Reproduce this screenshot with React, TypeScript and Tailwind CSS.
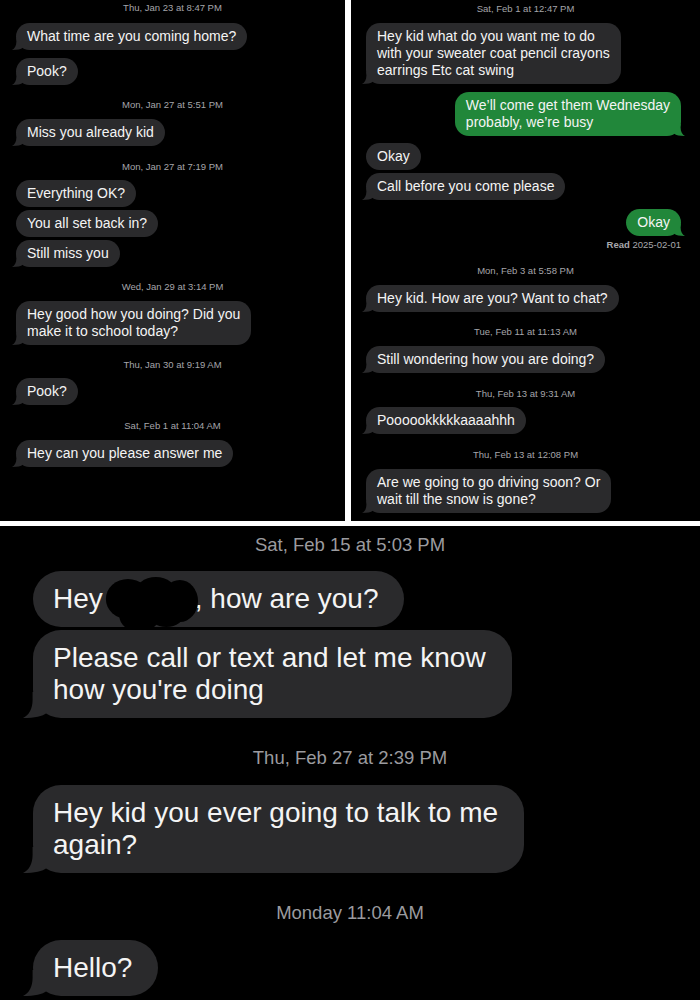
import type { ReactNode } from "react";

type Size = "sm" | "lg";

function Tail({ size, sent }: { size: Size; sent?: boolean }) {
  const fill = sent ? "#21873a" : "#2a2a2c";
  const pos =
    size === "sm"
      ? sent
        ? "-right-[4px] w-[11px] h-[12px] -scale-x-100"
        : "-left-[4px] w-[11px] h-[12px]"
      : "-left-[10px] w-[24px] h-[26px]";
  return (
    <svg
      viewBox="0 0 20 20"
      preserveAspectRatio="none"
      className={`absolute bottom-0 ${pos}`}
      aria-hidden
    >
      <path d="M8 0 L20 0 L20 16 C16 19 10 20 0 20 C5 18 8 13 8 6 Z" fill={fill} />
    </svg>
  );
}

function Bubble({
  children,
  size = "sm",
  tail,
  sent,
  className = "",
}: {
  children: ReactNode;
  size?: Size;
  tail?: boolean;
  sent?: boolean;
  className?: string;
}) {
  const base =
    size === "sm"
      ? "rounded-[14px] px-[11px] py-[5px] text-[14px] leading-[17px]"
      : "rounded-[28px] pl-5 pr-[26px] py-3 text-[28px] leading-[32px]";
  const color = sent ? "bg-[#21873a]" : "bg-[#2a2a2c]";
  return (
    <div
      className={`relative w-fit whitespace-nowrap text-[#f4f4f4] ${base} ${color} ${
        sent ? "self-end" : ""
      } ${className}`}
    >
      {tail && <Tail size={size} sent={sent} />}
      <span className="relative">{children}</span>
    </div>
  );
}

function Stamp({ children, className = "" }: { children: ReactNode; className?: string }) {
  return (
    <div
      className={`text-center text-[9.5px] leading-[12px] text-[#a5a5aa] ${className}`}
    >
      {children}
    </div>
  );
}

function BigStamp({ children, className = "" }: { children: ReactNode; className?: string }) {
  return (
    <div className={`-ml-[33px] text-center text-[18.5px] leading-[22px] text-[#9b9b9f] ${className}`}>
      {children}
    </div>
  );
}

function Redacted() {
  return (
    <span className="relative inline-block h-[1em] w-[92px] align-middle">
      <svg
        viewBox="0 0 100 60"
        preserveAspectRatio="none"
        className="absolute left-0 top-[-14px] h-[60px] w-[96px]"
        aria-hidden
      >
        <ellipse cx="26" cy="26" rx="23" ry="20" fill="#000" />
        <ellipse cx="55" cy="21" rx="22" ry="17" fill="#000" />
        <ellipse cx="80" cy="28" rx="19" ry="21" fill="#000" />
        <ellipse cx="38" cy="43" rx="21" ry="16" fill="#000" />
        <ellipse cx="66" cy="40" rx="19" ry="14" fill="#000" />
      </svg>
    </span>
  );
}

export default function App() {
  return (
    <div className="flex h-[1000px] w-[700px] flex-col gap-[5px] bg-white font-['Liberation_Sans',Arial,sans-serif]">
      <div className="flex h-[521px] gap-[6px]">
        {/* left screenshot */}
        <div className="flex w-[345px] flex-col bg-black pl-4 pt-[2px]">
          <Stamp className="-ml-4">Thu, Jan 23 at 8:47 PM</Stamp>
          <Bubble tail className="mt-[9px]">What time are you coming home?</Bubble>
          <Bubble tail className="mt-[8px]">Pook?</Bubble>
          <Stamp className="-ml-4 mt-[14px]">Mon, Jan 27 at 5:51 PM</Stamp>
          <Bubble tail className="mt-[8px]">Miss you already kid</Bubble>
          <Stamp className="-ml-4 mt-[15px]">Mon, Jan 27 at 7:19 PM</Stamp>
          <Bubble className="mt-[7px]">Everything OK?</Bubble>
          <Bubble className="mt-[3px]">You all set back in?</Bubble>
          <Bubble tail className="mt-[3px]">Still miss you</Bubble>
          <Stamp className="-ml-4 mt-[14px]">Wed, Jan 29 at 3:14 PM</Stamp>
          <Bubble tail className="mt-[8px]">
            Hey good how you doing? Did you
            <br />
            make it to school today?
          </Bubble>
          <Stamp className="-ml-4 mt-[14px]">Thu, Jan 30 at 9:19 AM</Stamp>
          <Bubble tail className="mt-[7px]">Pook?</Bubble>
          <Stamp className="-ml-4 mt-[15px]">Sat, Feb 1 at 11:04 AM</Stamp>
          <Bubble tail className="mt-[8px]">Hey can you please answer me</Bubble>
        </div>

        {/* right screenshot */}
        <div className="flex flex-1 flex-col bg-black pl-[15px] pr-[19px] pt-[3px]">
          <Stamp className="ml-[4px]">Sat, Feb 1 at 12:47 PM</Stamp>
          <Bubble tail className="mt-[8px]">
            Hey kid what do you want me to do
            <br />
            with your sweater coat pencil crayons
            <br />
            earrings Etc cat swing
          </Bubble>
          <Bubble tail sent className="mt-[8px]">
            We’ll come get them Wednesday
            <br />
            probably, we’re busy
          </Bubble>
          <Bubble className="mt-[7px]">Okay</Bubble>
          <Bubble tail className="mt-[3px]">Call before you come please</Bubble>
          <Bubble tail sent className="mt-[9px]">Okay</Bubble>
          <div className="mt-[3px] self-end text-[9.5px] leading-[12px] text-[#a8a8ad]">
            <span className="font-bold">Read</span> 2025-02-01
          </div>
          <Stamp className="ml-[4px] mt-[14px]">Mon, Feb 3 at 5:58 PM</Stamp>
          <Bubble tail className="mt-[8px]">Hey kid. How are you? Want to chat?</Bubble>
          <Stamp className="ml-[4px] mt-[14px]">Tue, Feb 11 at 11:13 AM</Stamp>
          <Bubble tail className="mt-[8px]">Still wondering how you are doing?</Bubble>
          <Stamp className="ml-[4px] mt-[15px]">Thu, Feb 13 at 9:31 AM</Stamp>
          <Bubble tail className="mt-[7px]">Poooookkkkkaaaahhh</Bubble>
          <Stamp className="ml-[4px] mt-[15px]">Thu, Feb 13 at 12:08 PM</Stamp>
          <Bubble tail className="mt-[8px]">
            Are we going to go driving soon? Or
            <br />
            wait till the snow is gone?
          </Bubble>
        </div>
      </div>

      {/* bottom screenshot */}
      <div className="flex flex-1 flex-col overflow-hidden bg-black pl-[33px] pt-[8px]">
        <BigStamp>Sat, Feb 15 at 5:03 PM</BigStamp>
        <Bubble size="lg" className="mt-[15px] pr-[20px]">
          Hey
          <Redacted />, how are you?
        </Bubble>
        <Bubble size="lg" tail className="mt-[3px]">
          Please call or text and let me know
          <br />
          how you're doing
        </Bubble>
        <BigStamp className="mt-[29px]">Thu, Feb 27 at 2:39 PM</BigStamp>
        <Bubble size="lg" tail className="mt-[16px]">
          Hey kid you ever going to talk to me
          <br />
          again?
        </Bubble>
        <BigStamp className="mt-[29px]">Monday 11:04 AM</BigStamp>
        <Bubble size="lg" tail className="mt-[16px]">Hello?</Bubble>
      </div>
    </div>
  );
}
